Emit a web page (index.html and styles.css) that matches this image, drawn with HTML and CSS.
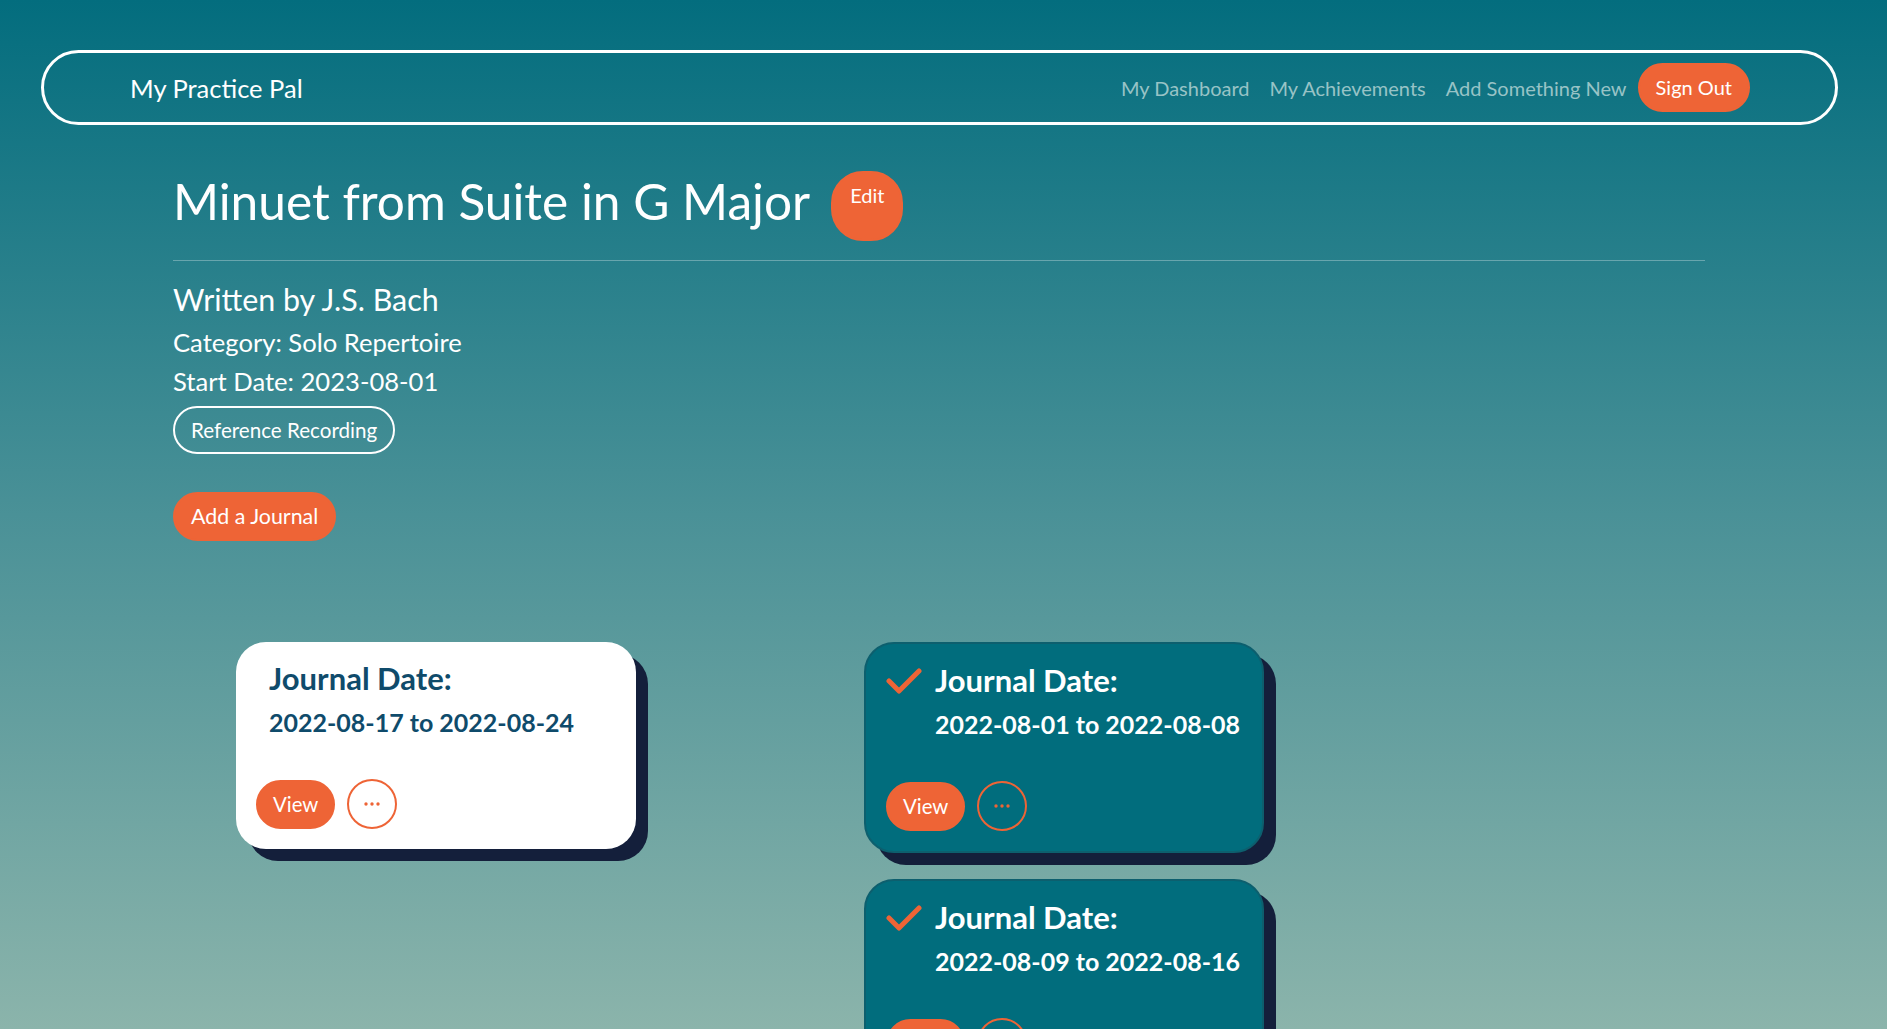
FILE: index.html
```html
<!DOCTYPE html>
<html lang="en">
<head>
<meta charset="utf-8">
<title>My Practice Pal</title>
<link rel="stylesheet" href="styles.css">
</head>
<body>
<nav class="navbar">
  <a class="brand" href="#">My Practice Pal</a>
  <div class="nav-links">
    <a class="nav-link" href="#">My Dashboard</a>
    <a class="nav-link" href="#">My Achievements</a>
    <a class="nav-link" href="#">Add Something New</a>
    <a class="btn btn-orange signout" href="#">Sign Out</a>
  </div>
</nav>

<main class="container">
  <div class="title-row">
    <h1 class="title">Minuet from Suite in G Major</h1>
    <a class="btn btn-orange edit" href="#">Edit</a>
  </div>
  <hr class="divider">
  <h2 class="composer">Written by J.S. Bach</h2>
  <p class="meta">Category: Solo Repertoire</p>
  <p class="meta">Start Date: 2023-08-01</p>
  <div class="button-row recording-row">
    <a class="btn btn-outline" href="#">Reference Recording</a>
  </div>
  <div class="button-row add-row">
    <a class="btn btn-orange add" href="#">Add a Journal</a>
  </div>

  <section class="journals">
    <div class="journal-col">
      <div class="journal-card card-open">
        <div class="card-head">
          <div class="card-text">
            <h3 class="card-title">Journal Date:</h3>
            <p class="card-dates">2022-08-17 to 2022-08-24</p>
          </div>
        </div>
        <div class="card-actions">
          <a class="btn btn-orange view" href="#">View</a>
          <a class="more" href="#"><svg width="18" height="6" viewBox="0 0 18 6"><circle cx="3" cy="3" r="1.7"/><circle cx="9" cy="3" r="1.7"/><circle cx="15" cy="3" r="1.7"/></svg></a>
        </div>
      </div>
    </div>
    <div class="journal-col">
      <div class="journal-card card-done">
        <div class="card-head">
          <svg class="check" width="36" height="28" viewBox="0 0 36 28"><path d="M3 14 L13 24 L33 4"/></svg>
          <div class="card-text">
            <h3 class="card-title">Journal Date:</h3>
            <p class="card-dates">2022-08-01 to 2022-08-08</p>
          </div>
        </div>
        <div class="card-actions">
          <a class="btn btn-orange view" href="#">View</a>
          <a class="more" href="#"><svg width="18" height="6" viewBox="0 0 18 6"><circle cx="3" cy="3" r="1.7"/><circle cx="9" cy="3" r="1.7"/><circle cx="15" cy="3" r="1.7"/></svg></a>
        </div>
      </div>
      <div class="journal-card card-done">
        <div class="card-head">
          <svg class="check" width="36" height="28" viewBox="0 0 36 28"><path d="M3 14 L13 24 L33 4"/></svg>
          <div class="card-text">
            <h3 class="card-title">Journal Date:</h3>
            <p class="card-dates">2022-08-09 to 2022-08-16</p>
          </div>
        </div>
        <div class="card-actions">
          <a class="btn btn-orange view" href="#">View</a>
          <a class="more" href="#"><svg width="18" height="6" viewBox="0 0 18 6"><circle cx="3" cy="3" r="1.7"/><circle cx="9" cy="3" r="1.7"/><circle cx="15" cy="3" r="1.7"/></svg></a>
        </div>
      </div>
    </div>
  </section>
</main>
</body>
</html>
```

FILE: styles.css
```css
html {
  min-height: 100%;
  background: linear-gradient(180deg, #036d7e 0%, #4a9197 50%, #8bb4ab 100%) fixed;
}

body {
  margin: 0;
  font-family: Lato, "Liberation Sans", sans-serif;
  color: #fff;
}

a {
  text-decoration: none;
  color: inherit;
}

.navbar {
  margin: 50px 49px 0 41px;
  height: 69px;
  border: 3px solid #fff;
  border-radius: 40px;
  display: flex;
  align-items: center;
  justify-content: space-between;
  padding: 0 85px 0 86px;
}

.brand {
  font-size: 25.5px;
  color: #fff;
}

.nav-links {
  display: flex;
  align-items: center;
}

.nav-link {
  font-size: 20px;
  color: #98c3c6;
  padding: 0 10px;
}

.btn {
  display: inline-block;
  font-size: 20px;
  line-height: 25px;
  padding: 10px 16px;
  border: 2px solid transparent;
  border-radius: 32px;
  color: #fff;
}

.btn-orange {
  background: #ee6436;
  border-color: #ee6436;
}

.btn-outline {
  border-color: #fff;
  line-height: 24px;
  font-size: 20.6px;
}

.signout {
  margin-left: 1px;
}

.container {
  margin: 0 182px 0 173px;
  padding-bottom: 40px;
}

.title-row {
  display: flex;
  gap: 21px;
  margin-top: 46px;
}

.title {
  margin: 0;
  font-size: 49.6px;
  font-weight: 400;
  line-height: 60px;
  padding-bottom: 10px;
}

.edit {
  padding: 10px 17px 6px;
}

.divider {
  margin: 19px 0 0;
  border: 0;
  border-top: 1px solid rgba(255, 255, 255, 0.3);
}

.composer {
  margin: 20px 0 10px;
  font-size: 30.4px;
  font-weight: 400;
  line-height: 1.2;
}

.meta {
  margin: 0 0 8px;
  font-size: 25.6px;
  line-height: 1.2;
}

.button-row {
  display: flex;
}

.recording-row {
  margin-top: 9px;
}

.add-row {
  margin-top: 38px;
}

.add {
  font-size: 21.4px;
}

.journals {
  display: flex;
  align-items: flex-start;
  gap: 228px;
  margin-top: 101px;
  padding-left: 63px;
}

.journal-col {
  display: flex;
  flex-direction: column;
  gap: 26px;
  width: 400px;
}

.journal-card {
  border-radius: 30px;
  box-shadow: 12px 12px 0 #141f3b;
  padding: 18px 20px 20px;
}

.card-open {
  background: #fff;
  color: #0f4b6b;
}

.card-done {
  background: #016d7d;
  border: 2px solid #0d5f6e;
  color: #fff;
}

.card-head {
  display: flex;
  align-items: flex-start;
  gap: 13px;
}

.card-open .card-head {
  padding-left: 13px;
}

.check {
  flex: none;
  margin-top: 5px;
  fill: none;
  stroke: #ee6436;
  stroke-width: 5;
  stroke-linecap: round;
  stroke-linejoin: round;
}

.card-title {
  margin: 0 0 10px;
  font-size: 31px;
  font-weight: 700;
  line-height: 1.2;
}

.card-dates {
  margin: 0;
  font-size: 25px;
  font-weight: 700;
  line-height: 1.2;
}

.card-actions {
  display: flex;
  align-items: center;
  gap: 12px;
  margin-top: 42px;
}

.view {
  font-size: 20.4px;
  padding: 10px 15px;
}

.more {
  width: 46px;
  height: 46px;
  border: 2px solid #ee6436;
  border-radius: 50%;
  display: flex;
  align-items: center;
  justify-content: center;
  fill: #ee6436;
}
```
